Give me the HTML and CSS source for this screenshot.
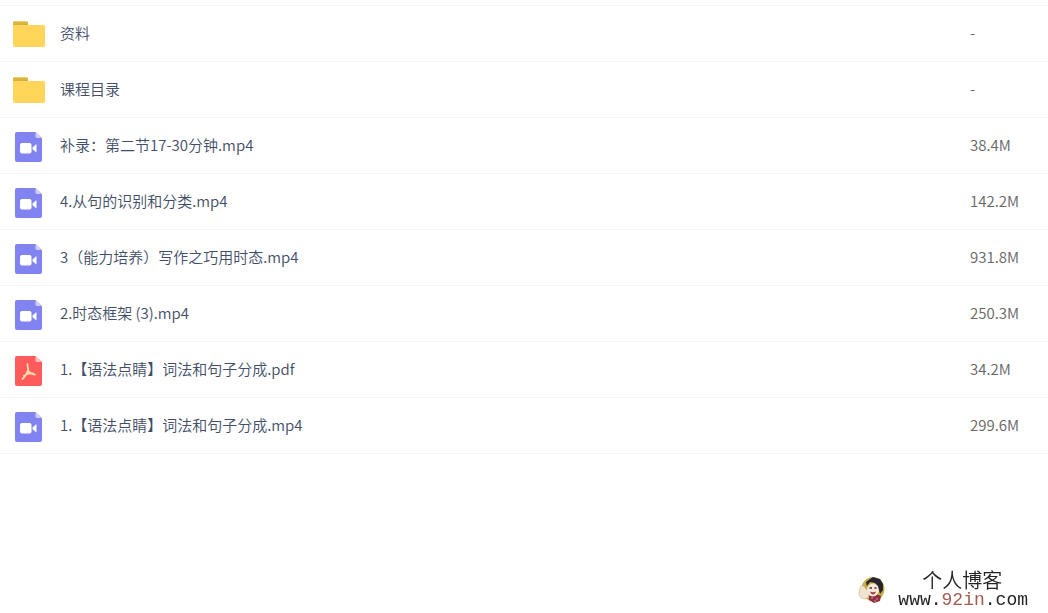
FILE: index.html
```html
<!DOCTYPE html>
<html lang="zh-CN">
<head>
    <meta charset="UTF-8">
    <meta name="viewport" content="width=device-width, initial-scale=1.0">
    <title>资料</title>
    <link rel="stylesheet" href="styles.css">
</head>
<body>
    <!-- Shared icons -->
    <svg class="sprite" aria-hidden="true">
        <symbol id="icon-folder" viewBox="0 0 32 28">
            <path d="M0 2a2 2 0 0 1 2-2h11a2 2 0 0 1 2 2v4H0z" fill="#d9b640"/>
            <path d="M1 .5h13" stroke="#f3cf61"/>
            <path d="M0 4h30a2 2 0 0 1 2 2v18a2 2 0 0 1-2 2H2a2 2 0 0 1-2-2z" fill="#ffd55a"/>
            <path d="M1 3.500h13" stroke="#c9ab45" stroke-dasharray="1 1"/>
        </symbol>
        <symbol id="icon-video" viewBox="0 0 28 30">
            <path d="M2 0h18.500L27 6v22a2 2 0 0 1-2 2H2a2 2 0 0 1-2-2V2a2 2 0 0 1 2-2z" fill="#8183f1"/>
            <path d="M20.500 0 27 6h-5a1.500 1.500 0 0 1-1.500-1.500z" fill="#cdcdfa"/>
            <rect x="5" y="11" width="11.500" height="10.500" rx="2" fill="#fff"/>
            <path d="M17.500 15.500 21.500 12v8.500l-4-3.200z" fill="#fff"/>
        </symbol>
        <symbol id="icon-pdf" viewBox="0 0 28 30">
            <path d="M2 0h18.500L27 6v22a2 2 0 0 1-2 2H2a2 2 0 0 1-2-2V2a2 2 0 0 1 2-2z" fill="#ff5b5d"/>
            <path d="M20.500 0 27 6h-5a1.500 1.500 0 0 1-1.500-1.500z" fill="#ffbdb8"/>
            <path d="M12.500 8c-.8 2 1.200 3.500.5 6.500-.8 3-3 6-5.500 8.500M13 14.500c1.500 2.800 4 3.700 7 4M9 19.800c2.500-2 5.500-2.600 9-2.300" fill="none" stroke="#ffdda6" stroke-width="1.800" stroke-linecap="round"/>
        </symbol>
    </svg>

    <main class="file-panel">
        <table class="file-list" aria-label="文件列表">
            <tbody>
                <tr>
                    <td class="name"><a href="#"><svg class="icon folder" aria-hidden="true"><use href="#icon-folder"/></svg><span>资料</span></a></td>
                    <td class="size">-</td>
                </tr>
                <tr>
                    <td class="name"><a href="#"><svg class="icon folder" aria-hidden="true"><use href="#icon-folder"/></svg><span>课程目录</span></a></td>
                    <td class="size">-</td>
                </tr>
                <tr>
                    <td class="name"><a href="#"><svg class="icon" aria-hidden="true"><use href="#icon-video"/></svg><span>补录：第二节17-30分钟.mp4</span></a></td>
                    <td class="size">38.4M</td>
                </tr>
                <tr>
                    <td class="name"><a href="#"><svg class="icon" aria-hidden="true"><use href="#icon-video"/></svg><span>4.从句的识别和分类.mp4</span></a></td>
                    <td class="size">142.2M</td>
                </tr>
                <tr>
                    <td class="name"><a href="#"><svg class="icon" aria-hidden="true"><use href="#icon-video"/></svg><span>3（能力培养）写作之巧用时态.mp4</span></a></td>
                    <td class="size">931.8M</td>
                </tr>
                <tr>
                    <td class="name"><a href="#"><svg class="icon" aria-hidden="true"><use href="#icon-video"/></svg><span>2.时态框架 (3).mp4</span></a></td>
                    <td class="size">250.3M</td>
                </tr>
                <tr>
                    <td class="name"><a href="#"><svg class="icon" aria-hidden="true"><use href="#icon-pdf"/></svg><span>1.【语法点睛】词法和句子分成.pdf</span></a></td>
                    <td class="size">34.2M</td>
                </tr>
                <tr>
                    <td class="name"><a href="#"><svg class="icon" aria-hidden="true"><use href="#icon-video"/></svg><span>1.【语法点睛】词法和句子分成.mp4</span></a></td>
                    <td class="size">299.6M</td>
                </tr>
            </tbody>
        </table>
    </main>

    <div class="watermark">
        <svg class="avatar" viewBox="0 0 28 28" aria-hidden="true">
            <ellipse cx="15" cy="13" rx="11.500" ry="12" fill="#c9b044"/>
            <path d="M2 12c1-3 4-3 5 0l3 3 1 6-4 2c-4 0-6-3-6-6z" fill="#f2e3cc" stroke="#b9ac98" stroke-width=".6"/>
            <path d="M11 20c5-2 9-2 12 0l-1 5-6 2-5-3z" fill="#8f2f42"/>
            <path d="M13 22h2M18 23h2M16 25h2" stroke="#e58b91"/>
            <ellipse cx="15" cy="14" rx="6" ry="6.500" fill="#f9e8d9"/>
            <path d="M9 11 8 6l4-3 3-2 3 1 4 1 3 5 0 6-3 4-2-8-3-3-5-1-3 4z" fill="#25232f"/>
            <path d="M11.500 12h2.500M16.500 12h2" stroke="#30303c" stroke-width="1.500"/>
            <path d="M12 15.500c2 1 4 1 6 0-1 4-5 4-6 0z" fill="#a73b43"/>
        </svg>
        <div class="watermark-text">
            <span class="blog-name">个人博客</span>
            <span class="blog-url">www.<b>92in</b>.com</span>
        </div>
    </div>
</body>
</html>
```
FILE: styles.css
```css
body {
    margin: 0;
    background-color: #fff;
    color: #424e67;
    font-family: "Noto Sans CJK SC", sans-serif;
    font-size: 15px;
    font-weight: 350;
    line-height: 22px;
}
.sprite {
    display: none;
}
.file-panel {
    padding-top: 5px;
}
.file-list {
    width: 100%;
    table-layout: fixed;
    border-collapse: collapse;
    border-top: 1px solid #f3f4fd;
}
.file-list tr {
    height: 56px;
    border-bottom: 1px solid #f3f4fd;
}
.file-list tr:hover {
    background-color: #fafaff;
}
.file-list td {
    padding: 0;
}
.file-list .name a {
    display: flex;
    align-items: center;
    gap: 15px;
    padding: 2px 0 0 13px;
    color: inherit;
    text-decoration: none;
}
.file-list .name span {
    padding-bottom: 4px;
}
.file-list .size {
    width: 78px;
    padding-bottom: 2px;
    color: #666;
}
.icon {
    flex: none;
    width: 32px;
    height: 30px;
}
.icon.folder {
    height: 28px;
}
.watermark {
    position: fixed;
    right: 20px;
    bottom: 3px;
    display: flex;
    align-items: center;
    gap: 12px;
}
.avatar {
    width: 28px;
    height: 28px;
}
.watermark-text {
    display: flex;
    flex-direction: column;
    color: #222;
}
.blog-name {
    padding-left: 24px;
    font-size: 20px;
    line-height: 20px;
}
.blog-url {
    font-family: "Liberation Mono", monospace;
    font-size: 18px;
    line-height: 20px;
}
.blog-url b {
    color: #a45c50;
    font-weight: normal;
}
```
